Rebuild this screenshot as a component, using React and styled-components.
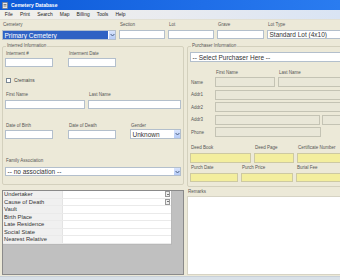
import React from 'react';
import styled, { createGlobalStyle } from 'styled-components';

const Global = createGlobalStyle`
  html, body { margin: 0; padding: 0; background: #ece9d8; }
  body { font-family: "Liberation Sans", Arial, sans-serif; }
  * { box-sizing: border-box; }
`;

const Window = styled.div`
  width: 340px;
  height: 280px;
  overflow: hidden;
  display: flex;
  flex-direction: column;
  background: #ece9d8;
`;

const TitleBar = styled.div`
  height: 10px;
  display: flex;
  align-items: center;
  gap: 3px;
  padding-left: 2px;
  background: linear-gradient(to right, #0c5ad8, #1f6ee8 60%, #2a7cf0);
  color: #fff;
  font-size: 5px;
  font-weight: bold;
`;

const MenuBar = styled.div`
  height: 10px;
  display: flex;
  align-items: center;
  padding-left: 1.25px;
  background: linear-gradient(to right, #f1f0ea, #e9ebf0 50%, #d9e4f4);
  border-bottom: 1px solid #e2e0d4;
`;

const MenuItem = styled.span`
  padding: 0 3.6px;
  font-size: 4.9px;
  color: #222;
`;

const Content = styled.div`
  flex: 1;
  padding-left: 2px;
  display: flex;
  flex-direction: column;
`;

const TopRow = styled.div`
  display: flex;
  gap: 3px;
  margin-top: 2px;
`;

const Field = styled.div`
  display: flex;
  flex-direction: column;
  width: ${p => p.w}px;
  margin-left: ${p => p.ml || 0}px;
  flex-shrink: 0;
`;

const Label = styled.div`
  height: 6px;
  line-height: 6px;
  margin-top: ${p => p.mt || 0}px;
  font-size: 4.5px;
  color: #555;
  padding-left: 1px;
  white-space: nowrap;
`;

const Input = styled.div`
  height: ${p => p.h || 9}px;
  margin-top: ${p => p.mt ?? 2}px;
  width: ${p => (p.w ? `${p.w}px` : '100%')};
  flex-shrink: 0;
  border: 1px solid ${p => (p.tone === 'off' ? '#c4c3b4' : p.tone === 'yellow' ? '#cdc9a2' : '#b3bfcc')};
  background: ${p => (p.tone === 'off' ? '#e9e7d8' : p.tone === 'yellow' ? '#f3ee9e' : '#fff')};
`;

const Combo = styled.div`
  height: ${p => p.h || 10}px;
  margin-top: ${p => p.mt ?? 1}px;
  width: ${p => (p.w ? `${p.w}px` : '100%')};
  flex-shrink: 0;
  display: flex;
  border: 1px solid #b3bfcc;
  background: #fff;
`;

const ComboText = styled.div`
  flex: 1;
  display: flex;
  align-items: center;
  padding-left: 1.5px;
  font-size: 6.5px;
  white-space: nowrap;
  overflow: hidden;
  color: ${p => (p.selected ? '#fff' : '#333')};
  background: ${p => (p.selected ? '#2f62c4' : 'transparent')};
`;

const ComboButton = styled.div`
  width: 7px;
  display: flex;
  align-items: center;
  justify-content: center;
  background: linear-gradient(#d8e4fd, #b5cbf7);
  border-left: 1px solid #fff;
`;

const Main = styled.div`
  display: flex;
  gap: 3px;
  margin-top: 3px;
`;

const Column = styled.div`
  display: flex;
  flex-direction: column;
  width: ${p => p.w}px;
  flex-shrink: 0;
`;

const Group = styled.fieldset`
  margin: 0;
  padding: 0 0 0 2px;
  height: ${p => p.h}px;
  border: 1px solid #d3d0bd;
  border-radius: 2px;
  display: flex;
  flex-direction: column;
`;

const Legend = styled.legend`
  font-size: 4.5px;
  line-height: 6px;
  color: #555;
  padding: 0 1px;
  margin-left: 1px;
`;

const Row = styled.div`
  display: flex;
  align-items: flex-start;
  gap: ${p => p.gap ?? 3}px;
  margin-top: ${p => p.mt ?? 0}px;
`;

const CheckRow = styled.label`
  display: flex;
  align-items: center;
  gap: 3px;
  height: 6px;
  margin-top: 10px;
  padding-left: 1px;
  font-size: 4.8px;
  color: #444;
`;

const Check = styled.span`
  width: 5px;
  height: 5px;
  border: 1px solid #7a8794;
  background: #fff;
`;

const RowLabel = styled.div`
  width: 25px;
  margin-right: ${p => p.mr || 0}px;
  flex-shrink: 0;
  font-size: 4.5px;
  color: #555;
  padding-left: 1px;
  align-self: center;
`;

const Stack = styled.div`
  display: flex;
  flex-direction: column;
  gap: 2.5px;
  margin-top: 1px;
`;

const GridPanel = styled.div`
  margin-top: 5px;
  height: 85px;
  background: #c0c0c0;
  border: 1px solid #8a8a8a;
`;

const Table = styled.div`
  width: 169px;
  background: #fff;
  border-right: 1px solid #b8b8b8;
  border-bottom: 1px solid #b8b8b8;
`;

const TableRow = styled.div`
  display: flex;
  height: 7.5px;
  border-bottom: 1px solid #eaeaea;
`;

const Cell = styled.div`
  width: 60px;
  flex-shrink: 0;
  background: #f0f0f0;
  border-right: 1px solid #e4e4e4;
  font-size: 5.8px;
  line-height: 6.5px;
  color: #333;
  padding-left: 1px;
  white-space: nowrap;
`;

const Value = styled.div`
  flex: 1;
  display: flex;
  justify-content: flex-end;
`;

const DropBox = styled.div`
  width: 5px;
  height: 6px;
  margin: 0 1px 0 0;
  border: 1px solid #999;
  background: #eee;
  display: flex;
  align-items: center;
  justify-content: center;
  &::after {
    content: '';
    border-left: 1.2px solid transparent;
    border-right: 1.2px solid transparent;
    border-top: 1.4px solid #000;
  }
`;

const Remarks = styled.div`
  margin-top: 1px;
  height: 79px;
  width: 160px;
  background: #fff;
  border: 1px solid #d6d3c4;
`;

const StatusStrip = styled.div`
  height: 4px;
  background: #d9e1e8;
  border-top: 1px solid #c8d0d8;
`;

const Arrow = () => (
  <svg width="5" height="4" viewBox="0 0 5 4">
    <path d="M0.6 1 L2.5 3 L4.4 1" fill="none" stroke="#4d6185" strokeWidth="1" />
  </svg>
);

const AppIcon = () => (
  <svg width="6" height="7" viewBox="0 0 6 7">
    <rect x="0.5" y="0.5" width="5" height="6" fill="#e8e8e8" stroke="#777" strokeWidth="0.6" />
    <rect x="1.5" y="2" width="3" height="0.8" fill="#666" />
    <rect x="1.5" y="3.6" width="3" height="0.8" fill="#666" />
  </svg>
);

const menus = ['File', 'Print', 'Search', 'Map', 'Billing', 'Tools', 'Help'];
const gridRows = [
  ['Undertaker', true],
  ['Cause of Death', true],
  ['Vault'],
  ['Birth Place'],
  ['Late Residence'],
  ['Social State'],
  ['Nearest Relative'],
];

const Select = ({ text, w, h, mt, selected }) => (
  <Combo w={w} h={h} mt={mt}>
    <ComboText selected={selected}>{text}</ComboText>
    <ComboButton><Arrow /></ComboButton>
  </Combo>
);

export default function App() {
  return (
    <Window>
      <Global />
      <TitleBar>
        <AppIcon />
        Cemetery Database
      </TitleBar>
      <MenuBar>
        {menus.map(m => <MenuItem key={m}>{m}</MenuItem>)}
      </MenuBar>
      <Content>
        <TopRow>
          <Field w={114}>
            <Label>Cemetery</Label>
            <Select text="Primary Cemetery" selected mt={2} />
          </Field>
          <Field w={46}>
            <Label>Section</Label>
            <Input />
          </Field>
          <Field w={46}>
            <Label>Lot</Label>
            <Input />
          </Field>
          <Field w={47}>
            <Label>Grave</Label>
            <Input />
          </Field>
          <Field w={90}>
            <Label>Lot Type</Label>
            <Combo mt={2} h={9}>
              <ComboText>Standard Lot (4x10)</ComboText>
            </Combo>
          </Field>
        </TopRow>

        <Main>
          <Column w={182}>
            <Group h={142}>
              <Legend>Interred Information</Legend>
              <Row gap={15} mt={2}>
                <Field w={48}>
                  <Label>Interment #</Label>
                  <Input mt={1} />
                </Field>
                <Field w={48}>
                  <Label>Interment Date</Label>
                  <Input mt={1} />
                </Field>
              </Row>
              <CheckRow>
                <Check />
                Cremains
              </CheckRow>
              <Row mt={9}>
                <Field w={80}>
                  <Label>First Name</Label>
                  <Input />
                </Field>
                <Field w={93}>
                  <Label>Last Name</Label>
                  <Input />
                </Field>
              </Row>
              <Row mt={14}>
                <Field w={48}>
                  <Label>Date of Birth</Label>
                  <Input mt={1} />
                </Field>
                <Field w={48} ml={12}>
                  <Label>Date of Death</Label>
                  <Input mt={1} />
                </Field>
                <Field w={51} ml={11}>
                  <Label>Gender</Label>
                  <Select text="Unknown" mt={0} />
                </Field>
              </Row>
              <Row mt={19}>
                <Field w={176}>
                  <Label>Family Association</Label>
                  <Select text="-- no association --" mt={3} h={9} />
                </Field>
              </Row>
            </Group>
            <GridPanel>
              <Table>
                {gridRows.map(([name, drop]) => (
                  <TableRow key={name}>
                    <Cell>{name}</Cell>
                    <Value>{drop && <DropBox />}</Value>
                  </TableRow>
                ))}
              </Table>
            </GridPanel>
          </Column>

          <Column w={165}>
            <Group h={144}>
              <Legend>Purchaser Information</Legend>
              <Combo mt={3} w={155}>
                <ComboText>-- Select Purchaser Here --</ComboText>
              </Combo>
              <Row mt={8} gap={0}>
                <RowLabel />
                <Field w={63}><Label>First Name</Label></Field>
                <Field w={60}><Label>Last Name</Label></Field>
              </Row>
              <Stack>
                <Row gap={3}>
                  <RowLabel mr={-3}>Name</RowLabel>
                  <Input tone="off" mt={0} h={10} w={60} />
                  <Input tone="off" mt={0} h={10} w={66} />
                </Row>
                <Row gap={0}>
                  <RowLabel>Addr1</RowLabel>
                  <Input tone="off" mt={0} h={10} w={130} />
                </Row>
                <Row gap={0}>
                  <RowLabel>Addr2</RowLabel>
                  <Input tone="off" mt={0} h={10} w={130} />
                </Row>
                <Row gap={2}>
                  <RowLabel mr={-2}>Addr3</RowLabel>
                  <Input tone="off" mt={0} h={10} w={105} />
                  <Input tone="off" mt={0} h={10} w={25} />
                </Row>
                <Row gap={0}>
                  <RowLabel>Phone</RowLabel>
                  <Input tone="off" mt={0} h={10} w={106} />
                </Row>
              </Stack>
              <Row mt={8}>
                <Field w={61}>
                  <Label>Deed Book</Label>
                  <Input tone="yellow" h={10} />
                </Field>
                <Field w={40}>
                  <Label>Deed Page</Label>
                  <Input tone="yellow" h={10} />
                </Field>
                <Field w={50}>
                  <Label>Certificate Number</Label>
                  <Input tone="yellow" h={10} />
                </Field>
              </Row>
              <Row mt={2}>
                <Field w={48}>
                  <Label>Purch Date</Label>
                  <Input tone="yellow" />
                </Field>
                <Field w={52}>
                  <Label>Purch Price</Label>
                  <Input tone="yellow" />
                </Field>
                <Field w={50}>
                  <Label>Burial Fee</Label>
                  <Input tone="yellow" />
                </Field>
              </Row>
            </Group>
            <Label mt={2}>Remarks</Label>
            <Remarks />
          </Column>
        </Main>
      </Content>
      <StatusStrip />
    </Window>
  );
}
